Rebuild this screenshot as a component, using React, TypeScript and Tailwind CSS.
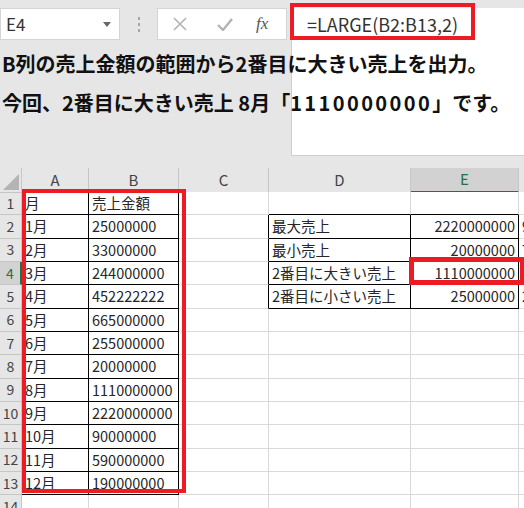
import React from "react";

const FONT = { fontFamily: '"Noto Sans CJK JP", "Noto Sans", sans-serif' };

// 1行分: [A, B, C, D, E, F]
const rows: string[][] = [
  ["月", "売上金額", "", "", "", ""],
  ["1月", "25000000", "", "最大売上", "2220000000", "9"],
  ["2月", "33000000", "", "最小売上", "20000000", "7"],
  ["3月", "244000000", "", "2番目に大きい売上", "1110000000", ""],
  ["4月", "452222222", "", "2番目に小さい売上", "25000000", "2"],
  ["5月", "665000000", "", "", "", ""],
  ["6月", "255000000", "", "", "", ""],
  ["7月", "20000000", "", "", "", ""],
  ["8月", "1110000000", "", "", "", ""],
  ["9月", "2220000000", "", "", "", ""],
  ["10月", "90000000", "", "", "", ""],
  ["11月", "590000000", "", "", "", ""],
  ["12月", "190000000", "", "", "", ""],
  ["", "", "", "", "", ""],
];

// 罫線の範囲 (row index 0始まり, col index 0=A)
const inTable = (r: number, c: number) =>
  (r >= 0 && r <= 12 && c >= 0 && c <= 1) || (r >= 1 && r <= 4 && c >= 3 && c <= 4);

const colLetters = ["A", "B", "C", "D", "E", "F"];

const Cell = ({ r, c, text }: { r: number; c: number; text: string }) => {
  const rightBlack = inTable(r, c) || inTable(r, c + 1);
  const bottomBlack = inTable(r, c) || inTable(r + 1, c);
  const alignRight = c === 4;
  return (
    <div
      className={`h-[23.33px] border-r border-b overflow-hidden whitespace-nowrap text-[14.5px] leading-[22px] text-[#262626] bg-white flex ${
        alignRight ? "justify-end pr-[3px]" : "pl-[3px]"
      } ${rightBlack ? "border-r-black" : "border-r-[#d9d9d9]"} ${
        bottomBlack ? "border-b-black" : "border-b-[#d9d9d9]"
      }`}
    >
      {text}
    </div>
  );
};

export default function App() {
  return (
    <div
      className="relative w-[524px] h-[508px] overflow-hidden bg-[#e6e6e6] text-[#262626]"
      style={FONT}
    >
      {/* 上部: 名前ボックスと数式バー */}
      <div className="flex h-[168px]">
        <div className="w-[291px] pt-[8px] flex items-start">
          <div className="w-[120px] h-[32px] bg-white border border-[#d4d4d4] flex items-center justify-between pl-[5px] pr-[8px]">
            <span className="text-[17px] text-[#333]">E4</span>
            <svg width="8" height="5" viewBox="0 0 8 5">
              <path d="M0 0 L8 0 L4 5 Z" fill="#666" />
            </svg>
          </div>
          <div className="w-[37px] h-[32px] flex flex-col items-center justify-center gap-[3px]">
            <span className="w-[2px] h-[3px] bg-[#a6a6a6]" />
            <span className="w-[2px] h-[3px] bg-[#a6a6a6]" />
            <span className="w-[2px] h-[3px] bg-[#a6a6a6]" />
          </div>
          <div className="w-[130px] h-[32px] bg-white border border-[#d4d4d4] flex items-center">
            <svg width="14" height="14" viewBox="0 0 14 14" className="ml-[15px]">
              <path d="M1 1 L13 13 M13 1 L1 13" stroke="#b3b3b3" strokeWidth="1.6" />
            </svg>
            <svg width="16" height="13" viewBox="0 0 16 13" className="ml-[30px]">
              <path d="M1 7 L6 12 L15 1" stroke="#b3b3b3" strokeWidth="2.4" fill="none" />
            </svg>
            <span
              className="ml-[23px] text-[17px] italic text-[#555]"
              style={{ fontFamily: '"Liberation Serif", serif' }}
            >
              fx
            </span>
          </div>
        </div>
        <div className="flex-1 mt-[8px] h-[148px] bg-white border-l border-b border-[#cfcfcf] pl-[15px] pt-[1px]">
          <span className="text-[18px] leading-[30px] text-[#333]">=LARGE(B2:B13,2)</span>
        </div>
      </div>

      {/* 列見出し */}
      <div className="grid grid-cols-[22px_67px_90px_90px_142px_108px_120px] h-[24px] text-[15px] text-[#444]">
        <div className="border-r border-b border-[#c6c6c6] flex items-end justify-end p-[2px]">
          <svg width="16" height="16" viewBox="0 0 16 16">
            <path d="M16 0 L16 16 L0 16 Z" fill="#b4b4b4" />
          </svg>
        </div>
        {colLetters.map((l) => (
          <div
            key={l}
            className={`flex items-center justify-center border-r border-[#c6c6c6] ${
              l === "E"
                ? "bg-[#d2d2d2] text-[#217346] border-b-2 border-b-[#217346]"
                : "border-b"
            }`}
          >
            {l}
          </div>
        ))}
      </div>

      {/* セル */}
      {rows.map((row, r) => (
        <div key={r} className="grid grid-cols-[22px_67px_90px_90px_142px_108px_120px]">
          <div
            className={`h-[23.33px] border-r border-b border-[#c6c6c6] flex items-center justify-center text-[14px] ${
              r === 3 ? "bg-[#d2d2d2] text-[#217346] border-r-2 border-r-[#217346]" : "text-[#444]"
            }`}
          >
            {r + 1}
          </div>
          {row.map((text, c) => (
            <Cell key={c} r={r} c={c} text={text} />
          ))}
        </div>
      ))}

      {/* 赤枠 */}
      <div className="absolute left-[290px] top-[3px] w-[185px] h-[37px] border-4 border-[#ed1c24]" />
      <div className="absolute left-[22px] top-[189px] w-[164px] h-[304px] border-4 border-[#ed1c24]" />
      <div className="absolute left-[409px] top-[257px] w-[116px] h-[28px] border-[5px] border-[#ed1c24]" />

      {/* 説明テキスト */}
      <div className="absolute left-[2px] top-[49px] text-[20px] font-bold leading-[30px] text-[#111] whitespace-nowrap">
        B列の売上金額の範囲から2番目に大きい売上を出力。
      </div>
      <div className="absolute left-[2px] top-[88px] text-[20px] font-bold leading-[30px] text-[#111] whitespace-nowrap">
        今回、2番目に大きい売上 8月「<span className="tracking-[2.4px]">1110000000</span>」です。
      </div>
    </div>
  );
}
